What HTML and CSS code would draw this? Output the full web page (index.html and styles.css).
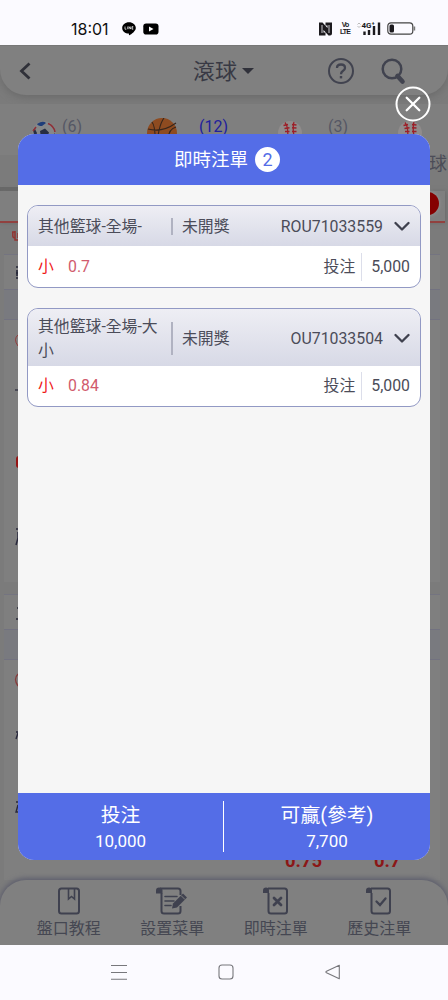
FILE: index.html
```html
<!DOCTYPE html>
<html lang="zh-Hant">
<head>
<meta charset="utf-8">
<meta name="viewport" content="width=device-width">
<title>即時注單</title>
<link rel="stylesheet" href="styles.css">
</head>
<body>
<svg class="defs" width="0" height="0">
  <defs>
    <g id="baseball">
      <circle cx="12" cy="12" r="12" fill="#908c8c"/>
      <path d="M7 1.500Q11 6 9.500 21.500M16 1Q14 6 17 21.500" fill="none" stroke="#9c1f28" stroke-width="1.300"/>
      <path d="M5.500 4.500l4.500-1M6.500 7.500l5-.8M18.500 4l-4.500-.5M18.500 7l-4.500-.3M7 10.500h4.500M18.500 10.500h-4.500" stroke="#9c1f28" stroke-width="1.500"/>
    </g>
    <g id="sheet" fill="none" stroke="#3f414f" stroke-width="2" stroke-linejoin="round">
      <path d="M5 2.500H21.500Q24 2.500 24 5V25Q24 27.500 21.500 27.500H8Q5.500 27.500 5.500 25V7"/>
      <path d="M0 7V4.500Q0 1.500 3 1.500Q6 1.500 6 4.500V7Z" fill="#3f414f" stroke="none"/>
    </g>
    <path id="chev" d="M1.500 2L8 8.500L14.500 2" fill="none" stroke="#3f414e" stroke-width="2.300" stroke-linecap="round" stroke-linejoin="round"/>
  </defs>
</svg>
<div class="phone">
  <header class="status">
    <span class="time">18:01</span>
    <svg class="line-app" width="14" height="14" viewBox="0 0 14 14"><path d="M7 .3C10.800.3 13.800 2.800 13.800 5.900C13.800 9 9.500 12 7.300 13.300C6.700 13.500 7.100 12 6.800 11.600C3.200 11.500.2 9 .2 5.900C.2 2.800 3.200.3 7 .3Z"/><path d="M3 4.500v2.700h1.400M5.700 4.500v2.700M7 7.200V4.600l1.700 2.500V4.500M11.300 4.600H10v2.600h1.300M10 5.900h1.200" fill="none" stroke="#fff" stroke-width=".7"/></svg>
    <svg width="16" height="12" viewBox="0 0 16 12"><rect x=".3" y=".5" width="15.200" height="11" rx="2.800"/><path d="M6 3.500v5l4.500-2.500z" fill="#fff"/></svg>
    <span class="grow"></span>
    <svg class="nfc" width="13" height="14" viewBox="0 0 13 14"><path d="M0 .5H3.500L8.500 6V3.500H6.500V.5H13V11.500Q13 13.500 11 13.500H9.500L4.500 8V10.500H6.500V13.500H0Z" fill="#1c1a1e"/><path d="M3 3v8M10 3v8" stroke="#fbfaff" stroke-width=".8"/></svg>
    <span class="volte"><b>Vo</b><b>LTE</b></span>
    <svg width="26" height="15" viewBox="0 0 26 15"><path d="M1.500 3.500L3 2l1.500 1.500M1.500 5L3 6.500 4.500 5" fill="none" stroke="#bbb" stroke-width="1"/><text x="5.500" y="7" class="net">4G⁺</text><path d="M8.500 10.500v3.500M13 9v5M18 5v9M23 1.500v12.500" fill="none" stroke="#1c1a1e" stroke-width="2.400"/></svg>
    <svg class="battery" width="29" height="13" viewBox="0 0 29 13"><rect x=".8" y=".8" width="25" height="11.400" rx="3.200" fill="none" stroke="#444" stroke-width="1.200"/><rect x="2.500" y="2.500" width="4.500" height="8" rx="1.500" fill="#1c1a1e"/><path d="M27.400 4.500v4" stroke="#777" stroke-width="1.600"/></svg>
  </header>

  <main class="app">
    <nav class="topbar">
      <svg width="14" height="20" viewBox="0 0 14 20"><path d="M11.500 2.500L3.500 10L11.500 17.500" fill="none" stroke="#303139" stroke-width="2.800"/></svg>
      <h1>滾球<i class="caret"></i></h1>
      <svg class="help" width="28" height="28" viewBox="0 0 28 28"><circle cx="14" cy="14" r="12" fill="none" stroke="#41434f" stroke-width="2"/><path d="M10 11Q10 7.500 14 7.500Q18 7.500 18 11Q18 12.700 15.800 14Q14 15.200 14 17.200" fill="none" stroke="#41434f" stroke-width="2.300"/><rect x="12.800" y="19" width="2.400" height="2.400" fill="#41434f"/></svg>
      <svg width="26" height="28" viewBox="0 0 26 28"><circle cx="12" cy="12" r="9.300" fill="none" stroke="#41434f" stroke-width="2.500"/><path d="M17.500 19l5 5.500" stroke="#41434f" stroke-width="4.600" stroke-linecap="round"/></svg>
    </nav>
    <div class="sports">
      <div class="sport s1"><svg width="24" height="24" viewBox="0 0 24 24"><circle cx="12" cy="12" r="11.800" fill="#858789"/><path d="M5 3Q11-1 14 2L10 5Q6 5 5 3Z" fill="#1e3d79"/><path d="M8 10l5-2.500 4 4-2 5H9zM1 9l2-1 2 4-2 5zM20 15l3-3-1 6z" fill="#272d42"/><path d="M16 2.500Q22 5 23 11M1 10l3-4" stroke="#8e3037" stroke-width="1.600" fill="none"/></svg><span>(6)</span></div>
      <div class="sport s2"><svg width="30" height="30" viewBox="0 0 30 30"><circle cx="15" cy="15" r="15" fill="#8e4b20"/><path d="M17 0Q11 8 10 30M1 11Q15 15 29 5M5 4Q9 9 8 29M29 9Q19 12 22 27" fill="none" stroke="#36251b" stroke-width="1.100"/></svg><span class="on">(12)</span></div>
      <div class="sport s3"><svg width="24" height="24"><use href="#baseball"/></svg><span>(3)</span></div>
      <div class="sport s4"><svg width="24" height="24"><use href="#baseball"/></svg></div>
    </div>
    <div class="tabs">球</div>
    <div class="filters"><i class="dot"></i></div>
    <div class="notice"><svg width="9" height="14" viewBox="0 0 9 14"><path d="M3 2v9h5V1M3 3H.8v4Q1 9 3 9M6 4v5" fill="none" stroke="#923532" stroke-width="1.500"/></svg></div>
    <section class="match first">
      <div class="team"><svg width="4" height="16" viewBox="0 0 4 16"><path d="M1 2h3M2 5v6M1 8h3M1 13h3" fill="none" stroke="#262738" stroke-width="1.600"/></svg></div>
      <div class="band"></div>
      <div class="odds">
        <svg width="6" height="260" viewBox="0 0 6 260"><path d="M5 15Q0 19 5 26" fill="none" stroke="#923b3b"/><path d="M2 70h4" stroke="#2d2e40" stroke-width="1.300"/><rect x="3" y="136" width="8" height="12" rx="3" fill="#961515"/><path d="M3 209h4M5 212v6l-2 7" fill="none" stroke="#29293d" stroke-width="1.500"/></svg>
      </div>
    </section>
    <section class="match second">
      <div class="team"><svg width="4" height="16" viewBox="0 0 4 16"><path d="M2 3h3M1 14h3" stroke="#262738" stroke-width="1.400"/></svg></div>
      <div class="band"></div>
      <div class="odds">
        <svg width="6" height="170" viewBox="0 0 6 170"><path d="M5 14Q0 19 5 26" fill="none" stroke="#863c3c" stroke-width="1.300"/><path d="M3 72h4M5 73l-2 6M3 142h3M5 145l-2 7h3" fill="none" stroke="#29293d" stroke-width="1.400"/></svg>
        <div class="prices"><b>0.75</b><b>0.7</b></div>
      </div>
    </section>
    <nav class="bottom">
      <a><svg width="24" height="30" viewBox="0 0 24 30"><rect x="2" y="2.500" width="20" height="25" rx="2.500" fill="none" stroke="#3f414f" stroke-width="2"/><path d="M11.500 3v10l3-2.500 3 2.500V3" fill="none" stroke="#3f414f" stroke-width="1.600"/></svg>盤口教程</a>
      <a><svg width="32" height="30" viewBox="0 0 32 30"><path d="M5.500 7V25Q5.500 27.500 8 27.500H22Q24.500 27.500 24.500 25V20M4 2.500H22Q24.500 2.500 24.500 5V9" fill="none" stroke="#3f414f" stroke-width="2"/><path d="M0 7.500V4.500Q0 1.500 3 1.500Q6.500 1.500 6.500 4.500V7.500Z" fill="#3f414f"/><path d="M9 10.500h12M9 15h9M9 19.500h6" stroke="#3f414f" stroke-width="1.600" stroke-linecap="round"/><path d="M16 22.500l1-5L27 7.500l4 4L21 21.500z" fill="#3f414f"/><path d="M25 9.500l4 4" stroke="#808080" stroke-width="1"/></svg>設置菜單</a>
      <a><svg width="26" height="30" viewBox="0 0 26 30"><use href="#sheet"/><path d="M11 12l7 7M18 12l-7 7" stroke="#3f414f" stroke-width="2.800" stroke-linecap="round"/></svg>即時注單</a>
      <a><svg width="26" height="30" viewBox="0 0 26 30"><use href="#sheet"/><path d="M10.500 15.500l3.500 3.500 5.500-6.500" fill="none" stroke="#3f414f" stroke-width="2.300" stroke-linecap="round"/></svg>歷史注單</a>
    </nav>
  </main>

  <footer class="system">
    <svg width="16" height="16" viewBox="0 0 16 16"><path d="M0 1.500h16M0 8.500h16M0 15.300h16" stroke="#77777c" stroke-width="1.100"/></svg>
    <svg width="16" height="16" viewBox="0 0 16 16"><rect x="1" y="1" width="14" height="14" rx="3" fill="none" stroke="#77777c" stroke-width="1.100"/></svg>
    <svg width="16" height="16" viewBox="0 0 16 16"><path d="M14.300 1.300V14.700L1.500 8.700Q.3 8 1.500 7.300Z" fill="none" stroke="#77777c" stroke-width="1.100" stroke-linejoin="round"/></svg>
  </footer>

  <svg class="close" width="36" height="36" viewBox="0 0 36 36"><circle cx="18" cy="18" r="16.500" fill="none" stroke="#fff" stroke-width="2"/><path d="M11.700 11.700L24.300 24.300M24.300 11.700L11.700 24.300" stroke="#fff" stroke-width="2.300" stroke-linecap="round"/></svg>

  <div class="modal">
    <h2>即時注單<span class="count">2</span></h2>
    <div class="bets">
      <article class="bet short">
        <div class="head"><span class="game">其他籃球-全場-</span><i></i><span>未開獎</span><span class="id">ROU71033559</span><svg width="16" height="11"><use href="#chev"/></svg></div>
        <div class="row"><span class="pick">小</span><span class="rate">0.7</span><span class="label">投注</span><span class="stake">5,000</span></div>
      </article>
      <article class="bet tall">
        <div class="head"><span class="game">其他籃球-全場-大<br>小</span><i></i><span>未開獎</span><span class="id">OU71033504</span><svg width="16" height="11"><use href="#chev"/></svg></div>
        <div class="row"><span class="pick">小</span><span class="rate">0.84</span><span class="label">投注</span><span class="stake">5,000</span></div>
      </article>
    </div>
    <div class="totals">
      <div><span>投注</span><b>10,000</b></div>
      <div><span>可贏(參考)</span><b>7,700</b></div>
    </div>
  </div>
</div>
</body>
</html>
```
FILE: styles.css
```css
* { box-sizing: border-box; }
body { margin: 0; font-family: Roboto, "Noto Sans CJK TC", sans-serif; color: #4b4c59; }
svg { display: block; flex: none; }
.defs { position: absolute; }
.phone { position: relative; width: 448px; height: 1000px; overflow: hidden; display: flex; flex-direction: column; background: #fbfaff; }

.status { height: 45px; flex: none; display: flex; align-items: center; padding: 12px 32px 0 71px; color: #111; }
.time { font-size: 16px; line-height: 20px; width: 51px; font-family: Inter, sans-serif; }
.line-app { margin-right: 7px; }
.grow { flex: 1; }
.nfc { margin-right: 8px; }
.volte { display: flex; flex-direction: column; align-items: center; width: 10px; font: 700 7px/6.500px "Liberation Sans", sans-serif; margin-right: 6px; color: #1c1a1e; }
.volte b { letter-spacing: -.9px; }
.net { font: 700 8px Roboto, sans-serif; fill: #1c1a1e; }
.battery { margin-left: 5px; }

.app { height: 900px; flex: none; display: flex; flex-direction: column; background: #7b7b7b; overflow: hidden; border-top: 1px solid #777; }
.topbar { height: 49px; flex: none; display: grid; grid-template-columns: 94px 1fr 28px 26px; align-items: center; padding: 0 42px 0 18px; column-gap: 25px; background: #808080; border-radius: 0 0 26px 26px; box-shadow: 0 3px 7px #6c6c6c; }
.topbar h1 { margin: 0; font-size: 22px; font-weight: 400; line-height: 30px; display: flex; align-items: center; color: #383944; padding: 2px 0 0 56px; }
.caret { border: 6px solid transparent; border-top-color: #30313a; border-bottom: 0; margin: -2px 0 0 5px; }
.sports { height: 51px; flex: none; margin-top: 9px; padding-top: 13px; display: grid; grid-template-columns: 115px 130px 121px 1fr; padding-left: 32px; background: #7f7f7f; }
.sport { display: flex; align-items: flex-start; gap: 6px; color: #555765; font-size: 16px; line-height: 20px; }
.sport svg { margin-top: 4px; }
.s2 { gap: 22px; }
.s2 svg { margin-top: 1px; }
.s3 { padding-left: 1px; gap: 26px; }
.sport .on { color: #20209c; }
.tabs { height: 36px; flex: none; text-align: right; font-size: 18px; line-height: 18px; color: #4c4d58; padding-right: 1px; background: linear-gradient(#686868, #686868) left bottom / 50% 4px no-repeat; }
.filters { height: 32px; flex: none; margin-right: 3px; border-bottom: 2px solid #91413f; background: #7f7f7f; box-shadow: 1px 0 4px #6b6b6b; display: flex; justify-content: flex-end; align-items: flex-start; padding: 1px 6px 0 0; }
.dot { width: 23px; height: 23px; border-radius: 50%; background: #850000; box-shadow: 0 0 4px #999; }
.notice { height: 31px; flex: none; padding: 6px 0 0 12px; }
.match { margin: 0 8px 0 4px; background: #7f7f7f; border-top: 1px solid #747480; flex: none; }
.team { height: 34px; padding: 10px 0 0 11px; }
.band { height: 31px; border: solid #727280; border-width: 1px 0; background: #797a7f; }
.odds { padding-left: 9px; }
.first .odds { height: 262px; }
.second { margin-top: 12px; }
.second .odds { height: 220px; display: flex; justify-content: space-between; align-items: flex-end; }
.second .odds > svg { align-self: flex-start; }
.prices { display: grid; grid-template-columns: 89px 66px; font-size: 18.500px; line-height: 22px; color: #8b1717; padding-bottom: 8px; }
.bottom { height: 68px; flex: none; margin-top: auto; padding: 6px 17px 0 17px; display: grid; grid-template-columns: repeat(4, 103.500px); background: #808080; border-radius: 26px 26px 0 0; box-shadow: 0 -1px 5px 1px #5d5e6d; position: relative; }
.bottom a { display: flex; flex-direction: column; align-items: center; font-size: 16px; line-height: 23px; color: #454752; gap: 1px; }
.system { height: 55px; flex: none; display: flex; gap: 91px; padding: 19px 0 0 111px; }

.close { position: absolute; left: 395px; top: 86px; }
.modal { position: absolute; left: 18px; top: 134px; width: 412px; height: 726px; border-radius: 16px; overflow: hidden; background: #f6f6f6; display: flex; flex-direction: column; }
.modal h2 { margin: 0; height: 51px; flex: none; padding-left: 6px; display: flex; justify-content: center; align-items: center; gap: 7px; background: #546de7; color: #fff; font-size: 18.500px; line-height: 24px; font-weight: 400; }
.count { width: 25px; height: 25px; border-radius: 50%; background: #fff; color: #546de7; text-align: center; line-height: 26px; font-size: 18px; }
.bets { flex: 1; padding: 20px 9px; display: flex; flex-direction: column; gap: 20px; }
.bet { border: 1px solid #9299c4; border-radius: 11px; overflow: hidden; background: #fff; display: flex; flex-direction: column; font-size: 15.850px; line-height: 24px; }
.short { height: 83px; }
.tall { height: 99px; }
.head { flex: 1; display: grid; grid-template-columns: 133px 2px 80px 1fr 16px; align-items: center; padding: 1px 10px 0; background: linear-gradient(#eeeef4, #d7d9e6); }
.tall .head { padding-top: 2px; }
.head > i { background: #b0b2c1; height: 17px; }
.tall .head > i { height: 33px; }
.head > i + span { padding-left: 9px; }
.id { text-align: right; padding-right: 11px; }
.row { height: 41px; flex: none; display: flex; align-items: center; padding: 0 10px; }
.tall .row { height: 40px; }
.pick { color: #f01919; width: 30px; }
.rate { color: #d15b6d; flex: 1; }
.label { padding-right: 6px; }
.stake { border-left: 1px solid #dcdeea; padding-left: 9px; line-height: 28px; }
.totals { height: 67px; flex: none; background: #546de7; color: #fff; display: grid; grid-template-columns: 206px 206px; align-items: center; }
.totals div { display: flex; flex-direction: column; align-items: center; font-size: 19.800px; line-height: 26px; height: 51px; padding-top: 2px; }
.totals div:first-child { border-right: 1px solid #fff; }
.totals b { font-size: 17px; font-weight: 400; line-height: 24px; }
```
